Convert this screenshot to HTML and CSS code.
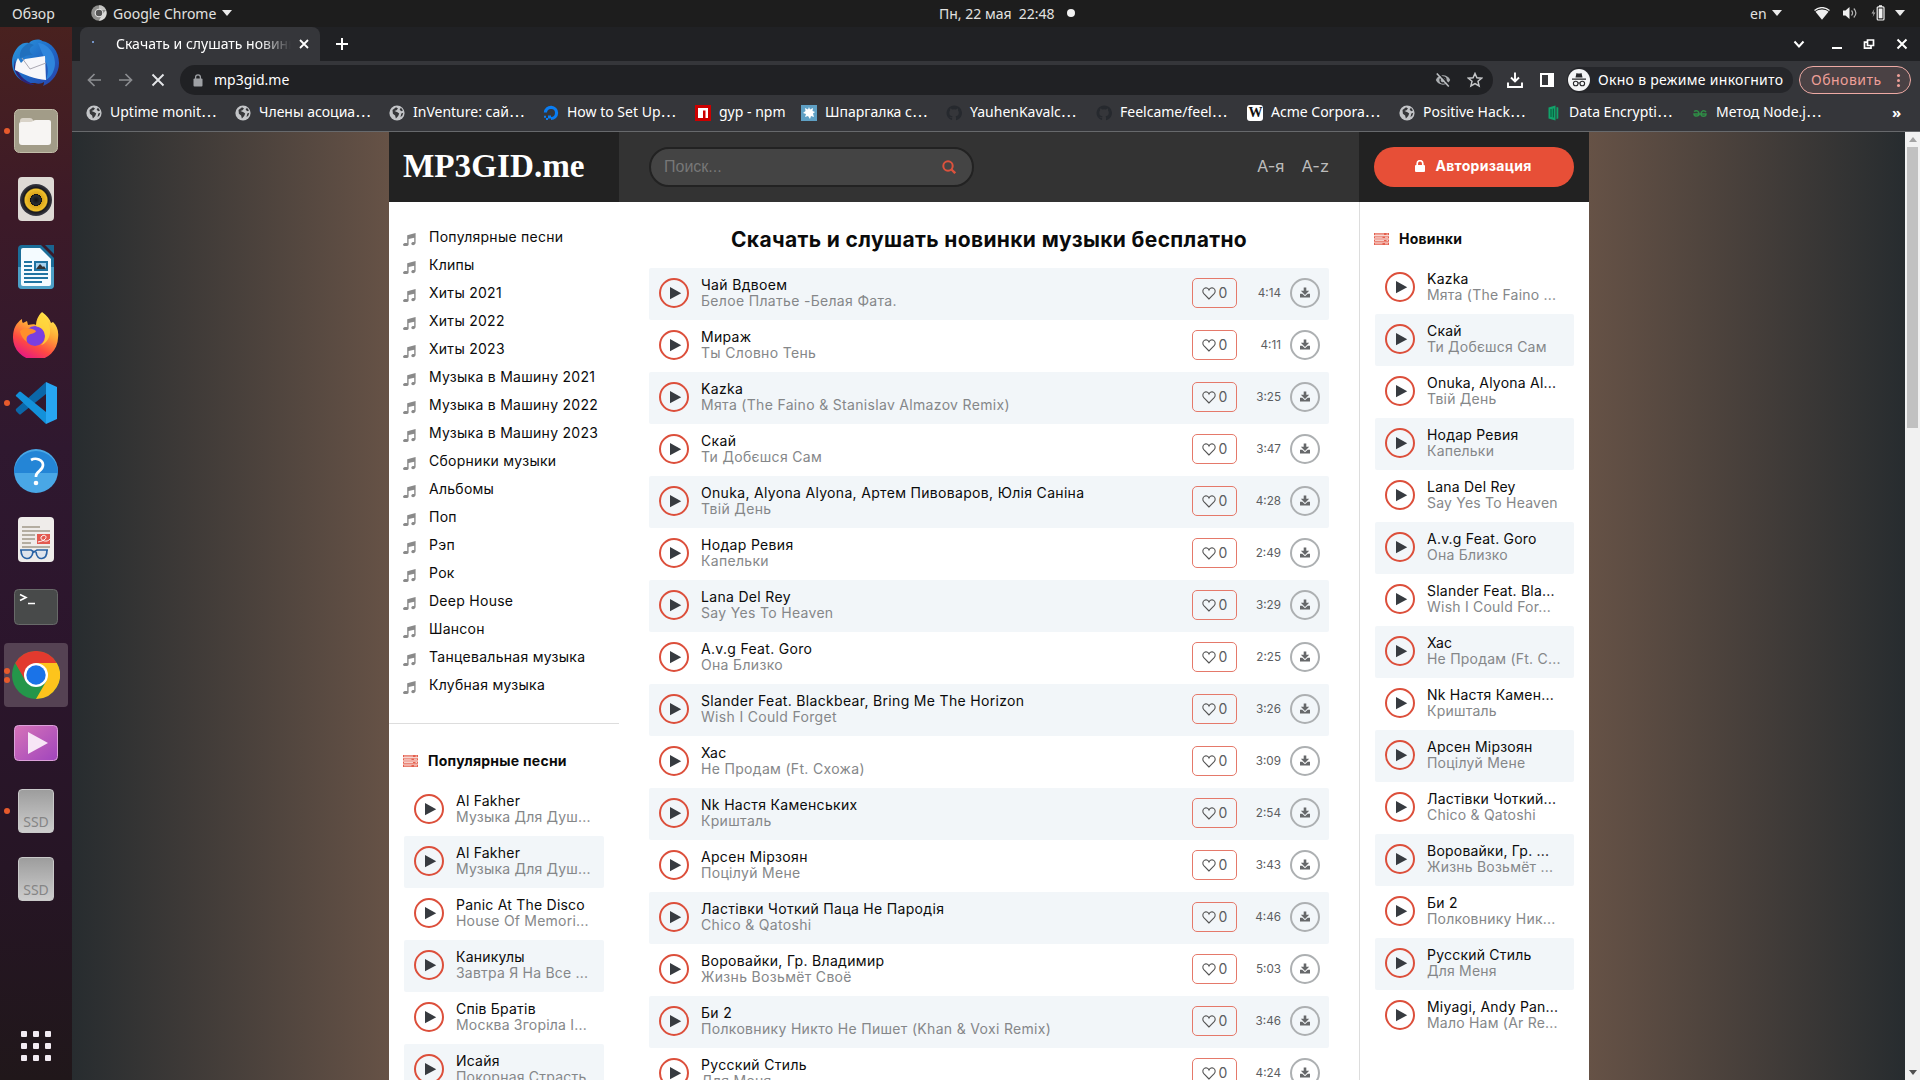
FILE: index.html
```html
<!DOCTYPE html>
<html lang="ru">
<head>
<meta charset="utf-8">
<title>Скачать и слушать новинки музыки бесплатно</title>
<link rel="stylesheet" href="styles.css">
</head>
<body>
<svg class="defs" width="0" height="0">
  <defs>
    <symbol id="play" viewBox="0 0 30 30"><circle cx="15" cy="15" r="14" fill="none" stroke="#dc4f3b" stroke-width="2"/><path d="M11 9v12.200L22.200 15.200z" fill="#373b40"/></symbol>
    <symbol id="heart" viewBox="0 0 14 13"><path d="M7 12 1.8 6.7C.3 5 .6 2.5 2.3 1.4 4 .4 6 1 7 3 8 1 10 .4 11.700 1.400c1.700 1.100 2 3.600.5 5.300z" fill="none" stroke="#555" stroke-width="1.1"/></symbol>
    <symbol id="save" viewBox="0 0 30 30"><circle cx="15" cy="15" r="14" fill="none" stroke="#adb0b2" stroke-width="2"/><path d="M13.700 9.500h2.600v3.300h2.900L15 17l-4.200-4.200h2.900zM10 15.800h2.300l2.700 2.500 2.700-2.500H20v3.800H10z" fill="#66686a"/></symbol>
    <symbol id="note" viewBox="0 0 13 13"><path d="M4.200 2.300 12.600 0v9.800c0 2.800-4.300 3-4.300 1 0-1.500 1.700-1.900 2.900-1.600V4.700L5.600 6.100v5.300c0 2.300-5.600 2.400-5.600.3 0-1.700 2.600-2 4.200-1.500z" fill="#8a8a8a"/></symbol>
    <symbol id="list" viewBox="0 0 15 12"><path d="M0 0h15v2.300H0zM0 3.200h15v2.300H0zM0 6.400h15v2.300H0zM0 9.600h15V12H0z" fill="#e4604e"/><path d="M1 1.100h9M12.500 1.100h1.500M1 4.300h7.500M11 4.300h3M1 7.500h9M12.500 7.500h1.500M1 10.800h7.500M11 10.800h3" stroke="#fff" stroke-width=".7"/></symbol>
    <symbol id="globe" viewBox="0 0 16 16"><circle cx="8" cy="8" r="7.600" fill="#c3c5c8"/><path d="M3.500 5l3.500-2.800 2 1.200-1.500 1.800-2 .8 3 1.300 1.700 1.200-1 2.400-2.300 2.600-.8-3-2.200-1.700zM12 2.800l2 2.700-1.800.7-1.600-1.700zM12.300 8.500l2-.7-1 3-1.800 1.200z" fill="#36373a"/></symbol>
    <symbol id="cat" viewBox="0 0 16 16"><path d="M8 .5a7.500 7.500 0 0 0-2.400 14.600c.4 0 .5-.2.5-.5v-1.500c-2 .4-2.500-1-2.700-1.400 1.200.3 1.500 1 2.700.6l.5-1C4.500 11 3.300 10 3.300 7.700c0-.9.300-1.600.8-2.200-.1-.7-.1-1.400.1-2 .9 0 1.600.5 2.100.9a8 8 0 0 1 3.600 0c.5-.4 1.300-.9 2-.9.300.6.300 1.300.1 2 .5.600.8 1.300.8 2.200 0 2.300-1.300 3.300-3.300 3.600.4.300.5.800.5 1.400v2c0 .3.100.5.500.5A7.500 7.500 0 0 0 8 .5z" fill="#26292e"/></symbol>
    <linearGradient id="ffBody" x1=".8" y1="0" x2=".3" y2="1"><stop offset="0" stop-color="#fff44f"/><stop offset=".4" stop-color="#ffa436"/><stop offset=".7" stop-color="#ff4a42"/><stop offset="1" stop-color="#e31587"/></linearGradient>
    <linearGradient id="video" x1="0" y1="0" x2="1" y2="1"><stop offset="0" stop-color="#d673b8"/><stop offset="1" stop-color="#a045bd"/></linearGradient>
    <linearGradient id="bird" x1="0" y1="0" x2="1" y2="1"><stop offset="0" stop-color="#2d9be0"/><stop offset=".55" stop-color="#1e66c4"/><stop offset="1" stop-color="#2b3fa8"/></linearGradient>
    <radialGradient id="cone"><stop offset="0" stop-color="#111"/><stop offset=".28" stop-color="#2b3033"/><stop offset=".36" stop-color="#111"/><stop offset=".38" stop-color="#d9a51c"/><stop offset=".68" stop-color="#f0c02a"/><stop offset=".76" stop-color="#17181c"/><stop offset="1" stop-color="#3a3b44"/></radialGradient>
  </defs>
</svg>

<header class="topbar">
  <span class="overview">Обзор</span>
  <span class="app-menu"><svg width="16" height="16" viewBox="0 0 16 16"><circle cx="8" cy="8" r="7.800" fill="#8f8f8d"/><path d="M8 .2A7.800 7.800 0 0 1 15 5H8z" fill="#c4c4c2"/><path d="M14.900 5a7.800 7.800 0 0 1-7 10.800L11 10z" fill="#dcdcda"/><circle cx="8" cy="8" r="3.800" fill="#555" stroke="#e6e6e6" stroke-width="1.100"/></svg>Google Chrome<i class="caret"></i></span>
  <span class="clock">Пн, 22 мая&nbsp; 22:48<i class="dot"></i></span>
  <span class="lang">en<i class="caret"></i></span>
  <span class="indicators">
    <svg width="16" height="13" viewBox="0 0 16 13"><path d="M.5 3.500C5-.4 11-.4 15.500 3.500" fill="none" stroke="#f0f0f0" stroke-width="1.300"/><path d="M1.500 4.700c3.500-2.800 9.500-2.800 13 0L8 12.800z" fill="#f0f0f0"/></svg>
    <svg width="16" height="14" viewBox="0 0 16 14"><path d="M1 4.500h2.500L7.500 1v12L3.500 9.500H1z" fill="#f0f0f0"/><path d="M9.500 4.500c1.300 1.500 1.300 3.500 0 5M11.800 2.500c2.500 2.700 2.500 6.300 0 9" fill="none" stroke="#b5b5b5" stroke-width="1.200"/></svg>
    <svg width="16" height="16" viewBox="0 0 16 16"><path d="M4.300 4 1.500 8.500h2L2.700 12l2.700-4.500H3.500z" fill="#aaa"/><path d="M9 .2h3V2H9z" fill="#f0f0f0"/><rect x="7.200" y="1.800" width="6.800" height="13.200" rx="1" fill="none" stroke="#f0f0f0" stroke-width="1.200"/><path d="M8.700 3.500h3.800v9.800H8.700z" fill="#f0f0f0"/></svg>
    <i class="caret"></i>
  </span>
</header>

<div class="desktop">
<nav class="dock">
  <div class="launcher"><svg width="50" height="50" viewBox="0 0 50 50"><path d="M18 5C22 .5 30 1 31 3c9 1 17 10 17 22 0 10-6 19-16 23 1-2 1-3 1-4-3 2-6 2-9 1C10 46 1 37 1 24 1 18 4 12 8 8c3-3 7-4 10-3z" fill="url(#bird)"/><path d="M27 5c8 0 17 9 17 20 0 8-4 14-9 17 3-8 2-14-1-20z" fill="#2f86dc"/><path d="M4 21c1 15 9 22 20 26-10 0-19-7-21-18z" fill="#2c2478"/><path d="m14 21 20-3 1 24C24 41 13 37 4 32c0-5 1-9 3-12l3 5z" fill="#f7f7fa"/><path d="m11 20 8 11 16-6" fill="none" stroke="#aaa8b2"/><path d="M18 5C12 8 8 13 9 20l4-1c3-2 7-2 9-2-5-3-4-8 1-10z" fill="#2170bd"/></svg></div>
  <div class="launcher running"><svg width="44" height="44" viewBox="0 0 44 44"><rect x=".5" y=".5" width="43" height="43" rx="5" fill="#a29c88" stroke="#c2bda9"/><path d="M6 12q0-3 3-3h7q2 0 3 2l1 2H6z" fill="#d9d3c8"/><path d="M5 15q0-2 2-2h9q2 0 3-1 1-1 3-1h13q2 0 2 2v20q0 3-3 3H8q-3 0-3-3z" fill="#f7f5f3"/></svg></div>
  <div class="launcher"><svg width="36" height="44" viewBox="0 0 36 44"><rect width="36" height="44" rx="4" fill="#dedad5"/><circle cx="18" cy="23" r="16" fill="url(#cone)"/></svg></div>
  <div class="launcher"><svg width="36" height="44" viewBox="0 0 36 44"><path d="M4 0h19l13 13v27q0 4-4 4H4q-4 0-4-4V4q0-4 4-4z" fill="#1b6d98"/><path d="M0 22h36v18q0 4-4 4H4q-4 0-4-4z" fill="#4c9fc6"/><path d="M27 0h9v9z" fill="#1a6490"/><path d="M5 3h17l11 11v25q0 2-2 2H5q-2 0-2-2V5q0-2 2-2z" fill="#f4fbff"/><path d="M6 17h8M6 21h8M6 25h8M6 29h24M6 33h24M6 37h18" stroke="#1f74a2" stroke-width="2"/><rect x="17" y="17" width="12" height="8" fill="#a5d2ef" stroke="#1f74a2" stroke-width="2"/><path d="m18 24 4-5 3 3 1-1 2 3z" fill="#333"/></svg></div>
  <div class="launcher"><svg width="46" height="46" viewBox="0 0 46 46"><path d="M29 0c5 4 8 7 9 11l2-1c4 4 6 9 5 16A22.500 22.500 0 0 1 0 25C0 17 3 11 9 7c0 2 0 3 1 4l4-2 1 4c4-1 7-1 8 0 0-5 2-9 6-13z" fill="url(#ffBody)"/><circle cx="22" cy="24" r="10" fill="#7a3fe0"/><path d="M7 19c5-4 12-3 16 0-1 3-5 2-7 4-2 1-3 3-2 7-4-3-6-6-7-11z" fill="#ff8f2b"/><path d="M28 1c5 5 10 11 9 20-1 7-5 11-9 12 5-4 5-11 2-15-2-3-6-3-7-4 1-5 2-9 5-13z" fill="#ffd83c" opacity=".8"/></svg></div>
  <div class="launcher running"><svg width="42" height="42" viewBox="0 0 42 42"><path d="M2 26 31 0v12L6 32q-1 1-2 0l-3-3q-1-2 1-3z" fill="#0b67a8"/><path d="M2 15 31 42V30L6 10q-1-1-2 0l-3 3q-1 1 1 2z" fill="#1391da"/><path d="M31 0 42 5v32l-11 5z" fill="#27a6f2"/></svg></div>
  <div class="launcher"><svg width="44" height="44" viewBox="0 0 44 44"><circle cx="22" cy="22" r="22" fill="#49a7e6"/><path d="M0 24a22 22 0 1 1 44 0z" fill="#2485d6"/><path d="M17 11c5-3 12 0 12 5 0 6-7 6-7 11v1" fill="none" stroke="#fff" stroke-width="2.700"/><circle cx="22" cy="34" r="2.300" fill="#fff"/></svg></div>
  <div class="launcher"><svg width="36" height="45" viewBox="0 0 36 45"><rect width="36" height="45" rx="4" fill="#efecea"/><path d="M4 10h18M4 14h28M4 18h13M4 22h13M4 26h9M4 30h28" stroke="#b4ada1" stroke-width="1.800"/><rect x="19" y="17" width="13" height="10" fill="#e35a50"/><path d="M20 25c12-2 8-9 4-6s4 8 8 3" fill="none" stroke="#fff"/><path d="M2 33h11l3 2 3-2h11M3 33c0 11 11 11 12 2M18 35c1 9 11 9 11-2" fill="#dfe4ec" stroke="#2962a4" stroke-width="1.700"/></svg></div>
  <div class="launcher"><svg width="44" height="36" viewBox="0 0 44 36"><rect x=".5" y=".5" width="43" height="35" rx="4" fill="#484a4a" stroke="#686a69"/><path d="m6 5.500 6 3-6 3M14 14.500h7" fill="none" stroke="#fff" stroke-width="1.600"/></svg></div>
  <div class="launcher active"><svg width="48" height="48" viewBox="0 0 48 48"><circle cx="24" cy="24" r="24" fill="#24964a"/><path d="M3.200 12A24 24 0 0 1 44.800 12H24L13.600 30z" fill="#e23a2e"/><path d="M24 12h20.800A24 24 0 0 1 24 48l10.400-18z" fill="#fdc41c"/><circle cx="24" cy="24" r="12" fill="#fff"/><circle cx="24" cy="24" r="9.700" fill="#1a73e8"/></svg></div>
  <div class="launcher"><svg width="44" height="36" viewBox="0 0 44 36"><rect x=".5" y=".5" width="43" height="35" rx="4" fill="url(#video)" stroke="#dba0d9"/><path d="M14 7v22l20-11z" fill="#f7e6f6"/></svg></div>
  <div class="launcher running"><div class="ssd">SSD</div></div>
  <div class="launcher"><div class="ssd">SSD</div></div>
  <div class="show-apps"><i></i><i></i><i></i><i></i><i></i><i></i><i></i><i></i><i></i></div>
</nav>

<div class="browser">
  <div class="tabstrip">
    <div class="tab"><i class="spinner"></i><span class="tab-title">Скачать и слушать новинки</span><svg width="10" height="10" viewBox="0 0 10 10"><path d="m1 1 8 8M9 1 1 9" stroke="#fff" stroke-width="1.800"/></svg></div>
    <svg class="new-tab" width="14" height="14" viewBox="0 0 14 14"><path d="M7 1v12M1 7h12" stroke="#fff" stroke-width="2"/></svg>
    <div class="window-buttons">
      <svg width="12" height="12" viewBox="0 0 12 12"><path d="m1.500 3.500 4.500 5 4.500-5" fill="none" stroke="#fff" stroke-width="2"/></svg>
      <svg width="12" height="12" viewBox="0 0 12 12"><path d="M1 10h10" stroke="#fff" stroke-width="2"/></svg>
      <svg width="12" height="12" viewBox="0 0 12 12"><path d="M4.500 2h6v5.500h-6zM4 4.200H1.500v6H8V8" fill="none" stroke="#fff" stroke-width="1.700"/></svg>
      <svg width="12" height="12" viewBox="0 0 12 12"><path d="m1.500 1.500 9 9M10.500 1.500l-9 9" stroke="#fff" stroke-width="2"/></svg>
    </div>
  </div>
  <div class="toolbar">
    <div class="nav-buttons">
      <svg width="14" height="14" viewBox="0 0 14 14"><path d="M14 7H1.500M7.500 1l-6 6 6 6" fill="none" stroke="#8b8d90" stroke-width="1.700"/></svg>
      <svg width="14" height="14" viewBox="0 0 14 14"><path d="M0 7h12.500M6.500 1l6 6-6 6" fill="none" stroke="#8b8d90" stroke-width="1.700"/></svg>
      <svg width="14" height="14" viewBox="0 0 14 14"><path d="m1.500 1.500 11 11M12.500 1.500l-11 11" stroke="#e4e6e8" stroke-width="1.900"/></svg>
    </div>
    <div class="omnibox">
      <svg width="10" height="13" viewBox="0 0 10 13"><rect x=".5" y="4.500" width="9" height="8" rx="1" fill="#9ea1a5"/><path d="M2.600 5V3.200a2.400 2.400 0 0 1 4.800 0V5" fill="none" stroke="#9ea1a5" stroke-width="1.300"/></svg>
      <span class="url">mp3gid.me</span>
      <svg width="16" height="14" viewBox="0 0 16 14"><path d="M.8 7C3.500.8 12.500.8 15.200 7 12.500 13.200 3.500 13.200.8 7z" fill="#a9acaf"/><circle cx="8" cy="7" r="3" fill="#a9acaf" stroke="#202124" stroke-width="1.300"/><path d="m3.200 0 12 12.600" stroke="#202124" stroke-width="1.600"/><path d="m1.800.5 12 13" stroke="#b9bcbf" stroke-width="1.600"/></svg>
      <svg width="16" height="16" viewBox="0 0 16 16"><path d="m8 1.500 1.900 4.300 4.700.4-3.600 3.100 1.100 4.600L8 11.500l-4.100 2.400L5 9.300 1.400 6.200l4.700-.4z" fill="none" stroke="#c6c8ca" stroke-width="1.500"/></svg>
    </div>
    <svg class="tool-download" width="16" height="16" viewBox="0 0 16 16"><path d="M8 .5V9M4 5.500l4 4 4-4M1 10.500V15h14v-4.500" fill="none" stroke="#fff" stroke-width="1.900"/></svg>
    <svg class="tool-panel" width="14" height="14" viewBox="0 0 14 14"><path d="M1 1h12v12H1zM9 1v12M11 1v12" fill="none" stroke="#fff" stroke-width="2"/></svg>
    <div class="incognito"><svg width="22" height="22" viewBox="0 0 22 22"><circle cx="11" cy="11" r="11" fill="#f4f5f6"/><path d="m7.500 8.500 1-4.500q2.500 1 5 0l1 4.500zM4 9.500h14v1.300H4z" fill="#27282b"/><circle cx="7.700" cy="14.500" r="2.300" fill="none" stroke="#27282b" stroke-width="1.100"/><circle cx="14.300" cy="14.500" r="2.300" fill="none" stroke="#27282b" stroke-width="1.100"/><path d="M10 14h2" stroke="#27282b"/></svg><span>Окно в режиме инкогнито</span></div>
    <div class="update"><span>Обновить</span><i class="kebab"></i></div>
  </div>
  <div class="bookmarks">
    <div><svg width="16" height="16"><use href="#globe"/></svg><span>Uptime monit<i>…</i></span></div>
    <div><svg width="16" height="16"><use href="#globe"/></svg><span>Члены асоциа<i>…</i></span></div>
    <div><svg width="16" height="16"><use href="#globe"/></svg><span>InVenture: сай<i>…</i></span></div>
    <div><svg width="16" height="16" viewBox="0 0 16 16"><path d="M8 13.500A5.600 5.600 0 1 0 2.400 7.500" fill="none" stroke="#0a7df2" stroke-width="3.200"/><path d="M5 10.500h3v3H5zM3 13h2v2H3zM1 10.800h2v2H1z" fill="#0a7df2"/></svg><span>How to Set Up<i>…</i></span></div>
    <div><svg width="16" height="16" viewBox="0 0 16 16"><path d="M0 0h16v16H0z" fill="#cb0000"/><path d="M3 3h10v10h-2.500V5.500H8V13H3z" fill="#fff"/></svg><span>gyp - npm</span></div>
    <div><svg width="16" height="16" viewBox="0 0 16 16"><path d="M0 0h16v16H0z" fill="#5fa0c4"/><path d="m8 2 1 2.500L12 3l-.5 3L14 7l-2 1.500L13 12l-3-1-1 3-2-3-3 1 1-3-3-1 2.500-2L4 3l3 1.500z" fill="#fff"/></svg><span>Шпаргалка с<i>…</i></span></div>
    <div><svg width="16" height="16"><use href="#cat"/></svg><span>YauhenKavalc<i>…</i></span></div>
    <div><svg width="16" height="16"><use href="#cat"/></svg><span>Feelcame/feel<i>…</i></span></div>
    <div><b class="wiki">W</b><span>Acme Corpora<i>…</i></span></div>
    <div><svg width="16" height="16"><use href="#globe"/></svg><span>Positive Hack<i>…</i></span></div>
    <div><svg width="16" height="16" viewBox="0 0 16 16"><path d="m3.500 2.500 7-2v15l-7-2zM11.500 2l1.800.5v11l-1.800.5z" fill="#11a36a"/><path d="M6 4v8M8.300 3.500v9" stroke="#06583a"/></svg><span>Data Encrypti<i>…</i></span></div>
    <div><svg width="16" height="16" viewBox="0 0 16 16"><path d="M2 6.500c3-2 5 0 5 2.500s-5 3-5 0h12c0 3-5 3-5 0s3-4.500 5-2" fill="none" stroke="#2f8d46" stroke-width="1.500"/></svg><span>Метод Node.j<i>…</i></span></div>
    <b class="more">»</b>
  </div>

  <div class="viewport">
  <div class="page">
    <div class="site">
      <aside class="left">
        <div class="logo">MP3GID.me</div>
        <ul class="menu">
          <li><svg width="13" height="13"><use href="#note"/></svg>Популярные песни</li>
          <li><svg width="13" height="13"><use href="#note"/></svg>Клипы</li>
          <li><svg width="13" height="13"><use href="#note"/></svg>Хиты 2021</li>
          <li><svg width="13" height="13"><use href="#note"/></svg>Хиты 2022</li>
          <li><svg width="13" height="13"><use href="#note"/></svg>Хиты 2023</li>
          <li><svg width="13" height="13"><use href="#note"/></svg>Музыка в Машину 2021</li>
          <li><svg width="13" height="13"><use href="#note"/></svg>Музыка в Машину 2022</li>
          <li><svg width="13" height="13"><use href="#note"/></svg>Музыка в Машину 2023</li>
          <li><svg width="13" height="13"><use href="#note"/></svg>Сборники музыки</li>
          <li><svg width="13" height="13"><use href="#note"/></svg>Альбомы</li>
          <li><svg width="13" height="13"><use href="#note"/></svg>Поп</li>
          <li><svg width="13" height="13"><use href="#note"/></svg>Рэп</li>
          <li><svg width="13" height="13"><use href="#note"/></svg>Рок</li>
          <li><svg width="13" height="13"><use href="#note"/></svg>Deep House</li>
          <li><svg width="13" height="13"><use href="#note"/></svg>Шансон</li>
          <li><svg width="13" height="13"><use href="#note"/></svg>Танцевальная музыка</li>
          <li><svg width="13" height="13"><use href="#note"/></svg>Клубная музыка</li>
        </ul>
        <h3 class="block-title"><svg width="15" height="12"><use href="#list"/></svg>Популярные песни</h3>
        <div class="tracks side">
          <div class="track"><svg width="30" height="30"><use href="#play"/></svg><p>Al Fakher<br><em>Музыка Для Душ...</em></p></div>
          <div class="track"><svg width="30" height="30"><use href="#play"/></svg><p>Al Fakher<br><em>Музыка Для Душ...</em></p></div>
          <div class="track"><svg width="30" height="30"><use href="#play"/></svg><p>Panic At The Disco<br><em>House Of Memori...</em></p></div>
          <div class="track"><svg width="30" height="30"><use href="#play"/></svg><p>Каникулы<br><em>Завтра Я На Все ...</em></p></div>
          <div class="track"><svg width="30" height="30"><use href="#play"/></svg><p>Спів Братів<br><em>Москва Згоріла І...</em></p></div>
          <div class="track"><svg width="30" height="30"><use href="#play"/></svg><p>Исайя<br><em>Покорная Страсть</em></p></div>
        </div>
      </aside>

      <main class="center">
        <div class="site-bar">
          <div class="search"><span>Поиск...</span><svg width="14" height="14" viewBox="0 0 14 14"><circle cx="6" cy="6" r="4.700" fill="none" stroke="#dc523d" stroke-width="2"/><path d="m9.500 9.500 3.700 3.700" stroke="#dc523d" stroke-width="2.400"/></svg></div>
          <span class="letters">А-я</span><span class="letters">A-z</span>
        </div>
        <h1>Скачать и слушать новинки музыки бесплатно</h1>
        <div class="tracks main">
          <div class="track"><svg width="30" height="30"><use href="#play"/></svg><p>Чай Вдвоем<br><em>Белое Платье -Белая Фата.</em></p><span class="like"><svg width="14" height="13"><use href="#heart"/></svg>0</span><time>4:14</time><svg width="30" height="30"><use href="#save"/></svg></div>
          <div class="track"><svg width="30" height="30"><use href="#play"/></svg><p>Мираж<br><em>Ты Словно Тень</em></p><span class="like"><svg width="14" height="13"><use href="#heart"/></svg>0</span><time>4:11</time><svg width="30" height="30"><use href="#save"/></svg></div>
          <div class="track"><svg width="30" height="30"><use href="#play"/></svg><p>Kazka<br><em>Мята (The Faino &amp; Stanislav Almazov Remix)</em></p><span class="like"><svg width="14" height="13"><use href="#heart"/></svg>0</span><time>3:25</time><svg width="30" height="30"><use href="#save"/></svg></div>
          <div class="track"><svg width="30" height="30"><use href="#play"/></svg><p>Скай<br><em>Ти Добєшся Сам</em></p><span class="like"><svg width="14" height="13"><use href="#heart"/></svg>0</span><time>3:47</time><svg width="30" height="30"><use href="#save"/></svg></div>
          <div class="track"><svg width="30" height="30"><use href="#play"/></svg><p>Onuka, Alyona Alyona, Артем Пивоваров, Юлія Саніна<br><em>Твій День</em></p><span class="like"><svg width="14" height="13"><use href="#heart"/></svg>0</span><time>4:28</time><svg width="30" height="30"><use href="#save"/></svg></div>
          <div class="track"><svg width="30" height="30"><use href="#play"/></svg><p>Нодар Ревия<br><em>Капельки</em></p><span class="like"><svg width="14" height="13"><use href="#heart"/></svg>0</span><time>2:49</time><svg width="30" height="30"><use href="#save"/></svg></div>
          <div class="track"><svg width="30" height="30"><use href="#play"/></svg><p>Lana Del Rey<br><em>Say Yes To Heaven</em></p><span class="like"><svg width="14" height="13"><use href="#heart"/></svg>0</span><time>3:29</time><svg width="30" height="30"><use href="#save"/></svg></div>
          <div class="track"><svg width="30" height="30"><use href="#play"/></svg><p>A.v.g Feat. Goro<br><em>Она Близко</em></p><span class="like"><svg width="14" height="13"><use href="#heart"/></svg>0</span><time>2:25</time><svg width="30" height="30"><use href="#save"/></svg></div>
          <div class="track"><svg width="30" height="30"><use href="#play"/></svg><p>Slander Feat. Blackbear, Bring Me The Horizon<br><em>Wish I Could Forget</em></p><span class="like"><svg width="14" height="13"><use href="#heart"/></svg>0</span><time>3:26</time><svg width="30" height="30"><use href="#save"/></svg></div>
          <div class="track"><svg width="30" height="30"><use href="#play"/></svg><p>Хас<br><em>Не Продам (Ft. Схожа)</em></p><span class="like"><svg width="14" height="13"><use href="#heart"/></svg>0</span><time>3:09</time><svg width="30" height="30"><use href="#save"/></svg></div>
          <div class="track"><svg width="30" height="30"><use href="#play"/></svg><p>Nk Настя Каменських<br><em>Кришталь</em></p><span class="like"><svg width="14" height="13"><use href="#heart"/></svg>0</span><time>2:54</time><svg width="30" height="30"><use href="#save"/></svg></div>
          <div class="track"><svg width="30" height="30"><use href="#play"/></svg><p>Арсен Мірзоян<br><em>Поцілуй Мене</em></p><span class="like"><svg width="14" height="13"><use href="#heart"/></svg>0</span><time>3:43</time><svg width="30" height="30"><use href="#save"/></svg></div>
          <div class="track"><svg width="30" height="30"><use href="#play"/></svg><p>Ластівки Чоткий Паца Не Пародія<br><em>Chico &amp; Qatoshi</em></p><span class="like"><svg width="14" height="13"><use href="#heart"/></svg>0</span><time>4:46</time><svg width="30" height="30"><use href="#save"/></svg></div>
          <div class="track"><svg width="30" height="30"><use href="#play"/></svg><p>Воровайки, Гр. Владимир<br><em>Жизнь Возьмёт Своё</em></p><span class="like"><svg width="14" height="13"><use href="#heart"/></svg>0</span><time>5:03</time><svg width="30" height="30"><use href="#save"/></svg></div>
          <div class="track"><svg width="30" height="30"><use href="#play"/></svg><p>Би 2<br><em>Полковнику Никто Не Пишет (Khan &amp; Voxi Remix)</em></p><span class="like"><svg width="14" height="13"><use href="#heart"/></svg>0</span><time>3:46</time><svg width="30" height="30"><use href="#save"/></svg></div>
          <div class="track"><svg width="30" height="30"><use href="#play"/></svg><p>Русский Стиль<br><em>Для Меня</em></p><span class="like"><svg width="14" height="13"><use href="#heart"/></svg>0</span><time>4:24</time><svg width="30" height="30"><use href="#save"/></svg></div>
        </div>
      </main>

      <aside class="right">
        <div class="login"><button><svg width="10" height="12" viewBox="0 0 10 12"><rect y="5" width="10" height="7" rx="1" fill="#fff"/><path d="M2.200 6V3.500a2.800 2.800 0 0 1 5.600 0V6" fill="none" stroke="#fff" stroke-width="1.700"/></svg>Авторизация</button></div>
        <h3 class="block-title"><svg width="15" height="12"><use href="#list"/></svg>Новинки</h3>
        <div class="tracks side">
          <div class="track"><svg width="30" height="30"><use href="#play"/></svg><p>Kazka<br><em>Мята (The Faino ...</em></p></div>
          <div class="track"><svg width="30" height="30"><use href="#play"/></svg><p>Скай<br><em>Ти Добєшся Сам</em></p></div>
          <div class="track"><svg width="30" height="30"><use href="#play"/></svg><p>Onuka, Alyona Al...<br><em>Твій День</em></p></div>
          <div class="track"><svg width="30" height="30"><use href="#play"/></svg><p>Нодар Ревия<br><em>Капельки</em></p></div>
          <div class="track"><svg width="30" height="30"><use href="#play"/></svg><p>Lana Del Rey<br><em>Say Yes To Heaven</em></p></div>
          <div class="track"><svg width="30" height="30"><use href="#play"/></svg><p>A.v.g Feat. Goro<br><em>Она Близко</em></p></div>
          <div class="track"><svg width="30" height="30"><use href="#play"/></svg><p>Slander Feat. Bla...<br><em>Wish I Could For...</em></p></div>
          <div class="track"><svg width="30" height="30"><use href="#play"/></svg><p>Хас<br><em>Не Продам (Ft. С...</em></p></div>
          <div class="track"><svg width="30" height="30"><use href="#play"/></svg><p>Nk Настя Камен...<br><em>Кришталь</em></p></div>
          <div class="track"><svg width="30" height="30"><use href="#play"/></svg><p>Арсен Мірзоян<br><em>Поцілуй Мене</em></p></div>
          <div class="track"><svg width="30" height="30"><use href="#play"/></svg><p>Ластівки Чоткий...<br><em>Chico &amp; Qatoshi</em></p></div>
          <div class="track"><svg width="30" height="30"><use href="#play"/></svg><p>Воровайки, Гр. ...<br><em>Жизнь Возьмёт ...</em></p></div>
          <div class="track"><svg width="30" height="30"><use href="#play"/></svg><p>Би 2<br><em>Полковнику Ник...</em></p></div>
          <div class="track"><svg width="30" height="30"><use href="#play"/></svg><p>Русский Стиль<br><em>Для Меня</em></p></div>
          <div class="track"><svg width="30" height="30"><use href="#play"/></svg><p>Miyagi, Andy Pan...<br><em>Мало Нам (Ar Re...</em></p></div>
        </div>
      </aside>
    </div>
  </div>
  <div class="scrollbar"><i class="up"></i><i class="thumb"></i><i class="down"></i></div>
  </div>
</div>
</div>
</body>
</html>
```
FILE: styles.css
```css
* { box-sizing: border-box; }
body { margin: 0; width: 1920px; height: 1080px; overflow: hidden; background: #202124; font-family: "Noto Sans", sans-serif; font-size: 14px; color: #fff; }
svg { display: block; flex: none; }
.defs { position: absolute; }
p, h1, h3, ul { margin: 0; padding: 0; }

/* system bar */
.topbar { height: 27px; background: #1d1d1d; display: grid; grid-template-columns: 79px 848px 611px auto 1fr; align-items: center; padding: 0 15px 1px 12px; color: #e2e2e0; }
.topbar > span { display: flex; align-items: center; }
.app-menu { gap: 6px; }
.caret { border: 5px solid transparent; border-top: 6px solid #ebebeb; border-bottom: 0; margin-left: 5px; }
.app-menu .caret { margin-left: 0; }
.dot { width: 8px; height: 8px; border-radius: 50%; background: #f2f2f2; margin-left: 12px; }
.topbar .lang { margin-left: 200px; }
.topbar .indicators { justify-content: flex-end; gap: 12px; }
.indicators .caret { margin-left: -3px; }

.desktop { display: flex; height: 1053px; }

/* dock */
.dock { width: 72px; padding-top: 2px; background: linear-gradient(#49211f, #3c1a28 18%, #2f182f 40%, #2b152c 60%, #261525 80%, #20171a); display: flex; flex-direction: column; align-items: center; }
.launcher { width: 64px; height: 64px; margin: 2px 0; border-radius: 4px; display: flex; align-items: center; justify-content: center; position: relative; }
.launcher.active { background: #554253; }
.launcher.running::before, .launcher.active::before, .launcher.active::after { content: ""; position: absolute; left: 0; top: 29px; width: 6px; height: 6px; border-radius: 50%; background: #e65a2c; }
.launcher.active::before { top: 25px; }
.launcher.active::after { top: 34px; }
.ssd { width: 36px; height: 44px; border-radius: 4px; border: 1px solid #c9c9c9; background: linear-gradient(#9d9d9d, #cdcdcd); color: #858585; font-size: 14px; line-height: 20px; padding-top: 22px; text-align: center; }
.show-apps { margin: auto 0 19px; display: grid; grid-template-columns: repeat(3, 6px); gap: 6px; }
.show-apps i { width: 6px; height: 6px; border-radius: 1px; background: #f3ecf3; }

/* browser chrome */
.browser { width: 1848px; display: flex; flex-direction: column; background: #35363a; }
.tabstrip { height: 34px; background: #202124; padding: 0 12px 0 8px; display: flex; align-items: center; }
.tab { width: 240px; height: 34px; background: #35363a; border-radius: 8px 8px 0 0; display: flex; align-items: center; padding: 0 11px 0 12px; }
.spinner { width: 2px; height: 2px; border-radius: 50%; background: #8ab4f8; margin: -5px 22px 0 0; }
.tab-title { width: 175px; padding-bottom: 2px; margin-right: 8px; overflow: hidden; white-space: nowrap; -webkit-mask-image: linear-gradient(90deg, #000 82%, transparent); mask-image: linear-gradient(90deg, #000 82%, transparent); }
.new-tab { margin-left: 15px; }
.window-buttons { margin-left: auto; display: grid; grid-template-columns: 38px 32px 33px 12px; }
.toolbar { height: 38px; display: flex; align-items: center; padding-left: 15px; }
.nav-buttons { display: flex; gap: 18px; }
.omnibox { width: 1313px; height: 30px; margin-left: 15px; border-radius: 15px; background: #202124; display: flex; align-items: center; gap: 16px; padding: 0 10px 0 13px; }
.url { margin-left: -5px; margin-right: auto; padding-bottom: 2px; }
.tool-download { margin-left: 14px; }
.tool-panel { margin-left: 17px; }
.incognito { width: 226px; height: 26px; margin-left: 13px; border-radius: 13px; background: #25262a; display: flex; align-items: center; gap: 8px; padding-left: 1px; white-space: nowrap; letter-spacing: .3px; }
.incognito span, .update span { padding-bottom: 2px; }
.update { width: 112px; height: 28px; margin-left: 6px; border-radius: 14px; border: 1px solid #eeaaa4; background: #4a4144; color: #ee9f98; display: flex; align-items: center; padding-left: 11px; letter-spacing: .5px; }
.kebab { width: 3px; height: 3px; margin-left: auto; margin-right: 10px; border-radius: 50%; background: #ee9f98; box-shadow: 0 -5px #ee9f98, 0 5px #ee9f98; }
.bookmarks { height: 33px; border-bottom: 1px solid #67696c; padding: 0 0 4px 14px; display: grid; grid-template-columns: 149px 154px 154px 152px 106px 145px 150px 151px 152px 146px 147px 200px auto; align-items: center; justify-content: start; }
.bookmarks div { display: flex; align-items: center; gap: 8px; white-space: nowrap; }
.bookmarks span { line-height: 20px; padding-bottom: 2px; }
.bookmarks i { font: 16px/1px "DejaVu Sans", sans-serif; }
.wiki { width: 16px; height: 16px; border-radius: 3px; background: #fff; color: #111; font: bold 14px/16px "Liberation Serif", serif; text-align: center; letter-spacing: -1px; }
.more { font-size: 15px; line-height: 20px; padding-bottom: 2px; }

/* page */
.viewport { flex: 1; display: flex; min-height: 0; overflow: hidden; }
.page { width: 1833px; padding-left: 317px; background: linear-gradient(90deg, #272c2f, #665246 317px, #665246 1517px, #272c2f); }
.site { width: 1200px; height: 948px; overflow: hidden; background: #fff; color: #0b0b0b; display: grid; grid-template-columns: 230px 740px 230px; font-family: Inter, sans-serif; font-size: 14px; }
.logo { height: 70px; background: #222; color: #fff; padding: 13px 0 0 14px; font: bold 33.200px/42px "Liberation Serif", serif; }
.menu { list-style: none; height: 522px; padding-top: 21px; border-bottom: 1px solid #ddd; letter-spacing: .27px; }
.menu li { height: 28px; display: flex; align-items: center; line-height: 28px; padding: 0 0 0 14px; gap: 13px; white-space: nowrap; }
.menu svg { margin-top: 5px; }
.block-title { display: flex; align-items: center; gap: 10px; height: 60px; padding: 14px 0 0 14px; font-size: 14px; line-height: 20px; letter-spacing: .25px; }
.right .block-title { padding: 13px 0 0 14px; }
.tracks .track { height: 52px; display: flex; align-items: center; padding: 0 10px 2px; line-height: 16px; white-space: nowrap; }
.track p { margin-left: 12px; height: 32px; letter-spacing: .32px; }
.side .track p { letter-spacing: .22px; }
.track em { font-style: normal; color: #858789; }
.side { margin: 0 15px; }
.side .track:nth-child(even), .main .track:nth-child(odd) { background: #f2f6f9; border-radius: 2px; }
.center { min-width: 0; }
.main { margin: 0 30px; }
.main .track { padding-right: 9px; }
.site-bar { height: 70px; background: #333; display: flex; align-items: center; padding: 0 30px 0 30px; color: #bcbcbc; font-size: 16.500px; }
.search { width: 325px; height: 40px; border: 2px solid #222; border-radius: 20px; background: #444; display: flex; align-items: center; justify-content: space-between; padding: 0 16px 0 13px; margin-right: auto; color: #777; font: 16px "Liberation Sans", sans-serif; }
.letters { margin-left: 17px; padding-bottom: 3px; }
h1 { height: 66px; padding-top: 25px; font-size: 21px; line-height: 26px; letter-spacing: .36px; text-align: center; white-space: nowrap; }
.like { margin-left: auto; width: 45px; height: 30px; border: 1px solid #e5796a; border-radius: 5px; display: flex; align-items: center; justify-content: center; gap: 3px; color: #5b5d5f; }
time { width: 44px; margin-right: 9px; text-align: right; font-size: 11.700px; padding-bottom: 1px; color: #5b5d5f; }
.right { border-left: 1px solid #ddd; }
.login { height: 70px; background: #222; margin-left: -1px; padding: 15px; }
.login button { width: 200px; height: 40px; border: 0; border-radius: 20px; background: #e74f37; color: #fff; font: bold 14px Inter, sans-serif; letter-spacing: .3px; display: flex; align-items: center; justify-content: center; gap: 10px; padding: 0 1px 3px 0; }

/* scrollbar */
.scrollbar { width: 15px; background: #f1f1f1; display: flex; flex-direction: column; align-items: center; }
.scrollbar .up { border: 4px solid transparent; border-top: 0; border-bottom: 5px solid #a3a3a3; margin: 5px 0; }
.scrollbar .thumb { width: 11px; height: 281px; background: #c1c1c1; }
.scrollbar .down { margin: auto 0 5px; border: 4px solid transparent; border-bottom: 0; border-top: 5px solid #505050; }
```
